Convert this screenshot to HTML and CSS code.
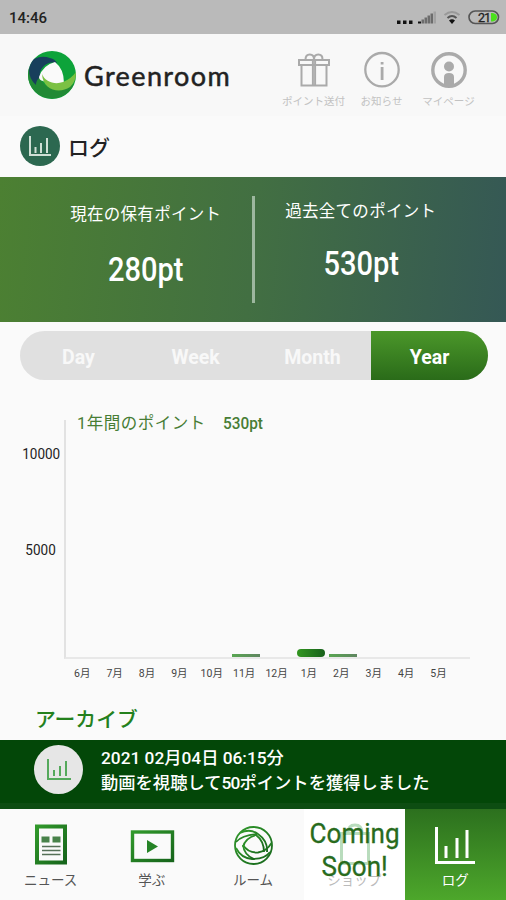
FILE: index.html
```html
<!DOCTYPE html>
<html lang="ja">
<head>
    <meta charset="UTF-8">
    <meta name="viewport" content="width=device-width, initial-scale=1.0">
    <title>Greenroom - ログ</title>
    <link rel="stylesheet" href="styles.css">
</head>
<body>
    <div class="status-bar">
        <span class="time">14:46</span>
        <svg class="status-icons" width="104" height="20" viewBox="0 0 104 20">
            <path d="M1 11.500h3.500v3.500H1zM7 11.500h3.500v3.500H7zM13 11.500h3.500v3.500H13z" fill="#111"/>
            <path d="M22 14.500v-2h3v2z" fill="#111"/>
            <path d="M25.500 14.500v-4H28v4zM28.500 14.500v-6H31v6zM31.500 14.500v-8H34v8zM34.500 14.500v-10H37v10z" fill="#6c6c6c"/>
            <path d="M37.500 14.500v-12H40v12z" fill="#a2a2a2"/>
            <path d="M48.500 6q7.500-6 15 0" fill="none" stroke="#999" stroke-width="2"/>
            <path d="M51.500 9q4.500-4 9 0" fill="none" stroke="#555" stroke-width="2"/>
            <path d="M53 11.500q3-2.500 6 0L56 15z" fill="#111"/>
            <rect x="73" y="2" width="29.500" height="12.500" rx="6.200" fill="none" stroke="#555" stroke-width="1.600"/>
            <path d="M95 4h2q4 1 4 4.200T97 12.500h-2z" fill="#4be01c"/>
            <text x="82" y="12.500" font-size="12.500" fill="#222" stroke="#222" stroke-width=".3" textLength="13">21</text>
        </svg>
    </div>

    <header>
        <svg class="logo" width="48" height="48" viewBox="0 0 48 48">
            <circle cx="24" cy="24" r="24" fill="#0da33a"/>
            <path d="M0 24A24 24 0 0 0 46 33Q32 42 20 36Q12 31 11 22L1 17Q0 20 0 24z" fill="#218a35"/>
            <path d="M1 19Q2 12 6 8Q14 4 22 7Q27 8 29 12Q20 10 15 16Q11 20 12 26Q8 29 8 34Q1 28 1 19z" fill="#183f5c"/>
            <path d="M11 26Q15 14 27 11Q36 18 36 32Q24 36 15 30Q11 29 11 26z" fill="#fafafa"/>
            <path d="M14 23C17 31 27 34 35 31Q43 28 48 21Q48 31 42 36C32 43 15 40 14 23z" fill="#7bc143"/>
        </svg>
        <h1>Greenroom</h1>
        <nav class="top-nav">
            <a class="gift" href="#">
                <svg width="36" height="38" viewBox="0 0 36 38">
                    <g fill="none" stroke="#aaa" stroke-width="2">
                        <path d="M3 9h30v5H3zM5.500 14h25v20.500h-25zM16.900 9v25.500M19.100 9v25.500"/>
                        <path d="M9.500 8.500q0-5 4.300-5T18 8.500q0-5 4.300-5t4.200 5"/>
                    </g>
                </svg>
                <span>ポイント送付</span>
            </a>
            <a class="info" href="#">
                <svg width="36" height="38" viewBox="0 0 36 38">
                    <circle cx="18" cy="18.700" r="16.700" fill="none" stroke="#aaa" stroke-width="2.300"/>
                    <path d="M16.700 16h2.800v13h-2.800zM16.700 11h2.800v2.600h-2.800z" fill="#aaa"/>
                </svg>
                <span>お知らせ</span>
            </a>
            <a class="mypage" href="#">
                <svg width="36" height="38" viewBox="0 0 36 38">
                    <circle cx="18" cy="19" r="16.200" fill="none" stroke="#aaa" stroke-width="3.400"/>
                    <circle cx="18" cy="15.500" r="5" fill="#aaa"/>
                    <path d="M13 35v-9q0-4 5-4t5 4v9z" fill="#aaa"/>
                </svg>
                <span>マイページ</span>
            </a>
        </nav>
    </header>

    <div class="page-title">
        <div class="title-icon">
            <svg width="24" height="22" viewBox="0 0 24 22" fill="none" stroke="#d0e0d6" stroke-width="2">
                <path d="M2 1v19H23M7.500 18v-6M13 18V8M19 18V3"/>
            </svg>
        </div>
        <h2>ログ</h2>
    </div>

    <section class="points">
        <div class="current">
            <p>現在の保有ポイント</p>
            <strong>280pt</strong>
        </div>
        <div class="total">
            <p>過去全てのポイント</p>
            <strong>530pt</strong>
        </div>
    </section>

    <div class="tabs">
        <button>Day</button>
        <button>Week</button>
        <button>Month</button>
        <button class="active">Year</button>
    </div>

    <!-- グラフ -->
    <section class="chart">
        <div class="y-axis">
            <span>10000</span>
            <span>5000</span>
        </div>
        <div class="plot">
            <h3>1年間のポイント<span>530pt</span></h3>
            <div class="bars">
                <i></i><i></i><i></i><i></i><i></i><i class="low"></i>
                <i></i><i class="high"></i><i class="low"></i><i></i><i></i><i></i>
            </div>
        </div>
        <div class="months">
            <span>6月</span><span>7月</span><span>8月</span><span>9月</span>
            <span>10月</span><span>11月</span><span>12月</span><span>1月</span>
            <span>2月</span><span>3月</span><span>4月</span><span>5月</span>
        </div>
    </section>

    <h2 class="archive-title">アーカイブ</h2>
    <div class="archive">
        <div class="archive-icon">
            <svg width="26" height="23" viewBox="0 0 26 23" fill="none" stroke="#55a95c" stroke-width="2">
                <path d="M2 1v20h23M8 18v-6M14 18V8M20 18V3"/>
            </svg>
        </div>
        <div class="archive-text">
            <p class="date">2021 02月04日 06:15分</p>
            <p class="detail">動画を視聴して<b>50</b>ポイントを獲得しました</p>
        </div>
    </div>

    <footer>
        <a href="#">
            <svg width="46" height="44" viewBox="0 0 46 44">
                <defs>
                    <linearGradient id="green" x1="0" y1="0" x2="1" y2="1">
                        <stop offset="0" stop-color="#31992b"/>
                        <stop offset="1" stop-color="#16651b"/>
                    </linearGradient>
                </defs>
                <rect x="9" y="3.500" width="28" height="36" fill="none" stroke="url(#green)" stroke-width="4"/>
                <path d="M13.500 13.500h8v6h-8zM24.500 13.500h8v6h-8z" fill="#48824a"/>
                <path d="M14 23.500h18.500M14 27.500h18.500M14 31.500h18.500" stroke="#557057" stroke-width="1.300"/>
            </svg>
            <span>ニュース</span>
        </a>
        <a href="#">
            <svg width="46" height="44" viewBox="0 0 46 44">
                <rect x="3.500" y="9" width="40" height="28.500" fill="none" stroke="url(#green)" stroke-width="3.400"/>
                <path d="M18 17l11 6.500L18 30z" fill="#258326"/>
            </svg>
            <span>学ぶ</span>
        </a>
        <a href="#">
            <svg width="46" height="44" viewBox="0 0 46 44" fill="none" stroke="url(#green)" stroke-width="1.800">
                <circle cx="23.500" cy="22.500" r="18.500"/>
                <path d="M10 10Q20 5 28 11Q38 18 37 29"/>
                <path d="M6 19Q12 12 27 11"/>
                <path d="M13 24Q15 15 26 12Q34 18 34 29"/>
                <path d="M13 22Q18 30 28 29.500Q37 28 41.500 20"/>
                <path d="M6 25Q11 35 22 36Q35 36 40 29"/>
                <path d="M13 22Q14 32 24 36"/>
            </svg>
            <span>ルーム</span>
        </a>
        <a class="shop" href="#">
            <svg width="46" height="44" viewBox="0 0 46 44" fill="none" stroke="#b9dcbd" stroke-width="3">
                <path d="M10.500 10.500h27v30h-27zM17 10q0-8 7-8t7 8"/>
            </svg>
            <span>ショップ</span>
            <strong class="coming-soon">Coming<br>Soon!</strong>
        </a>
        <a class="active" href="#">
            <svg width="46" height="44" viewBox="0 0 46 44" fill="none" stroke="#fff" stroke-width="3">
                <path d="M4.500 4v35.500H43M14 35V23M25 35V15M35 35V7"/>
            </svg>
            <span>ログ</span>
        </a>
    </footer>
</body>
</html>
```
FILE: styles.css
```css
* {
    margin: 0;
    padding: 0;
    box-sizing: border-box;
}

body {
    width: 506px;
    height: 900px;
    overflow: hidden;
    background-color: #fafafa;
    color: #222;
    font-family: Roboto, "Noto Sans CJK JP", sans-serif;
}

a {
    color: inherit;
    text-decoration: none;
}

svg {
    display: block;
}

.status-bar {
    display: flex;
    justify-content: space-between;
    height: 34px;
    padding: 9px 6px 0 9px;
    background-color: #bababa;
}

.time {
    font-size: 15px;
    font-weight: 500;
    line-height: 18px;
}

header {
    display: flex;
    height: 82px;
    padding: 17px 22px 0 28px;
    background-color: #f8f8f8;
}

header h1 {
    width: 154px;
    margin-left: 8px;
    font-family: Lato, sans-serif;
    font-size: 27px;
    font-weight: 400;
    line-height: 49px;
    letter-spacing: 1.4px;
    -webkit-text-stroke: 0.5px #222;
}

.top-nav {
    display: flex;
    margin-left: 41px;
}

.top-nav a {
    display: flex;
    flex-direction: column;
    align-items: center;
    width: 67px;
    color: #c2c2c2;
    font-size: 10.500px;
    line-height: 15px;
    white-space: nowrap;
}

.top-nav .gift {
    width: 69px;
}

.top-nav span {
    margin-top: 5px;
}

.page-title {
    display: flex;
    align-items: center;
    height: 61px;
    padding: 0 0 2px 20px;
}

.title-icon {
    display: flex;
    align-items: center;
    justify-content: center;
    width: 40px;
    height: 40px;
    border-radius: 50%;
    background-color: #2c6850;
}

.page-title h2 {
    margin-left: 8px;
    font-size: 21px;
    font-weight: 500;
}

.points {
    display: flex;
    height: 145px;
    padding-top: 19px;
    background: linear-gradient(95deg, #4c8032, #426f42 50%, #355855);
    color: #fff;
    text-align: center;
}

.points div {
    width: 252px;
}

.points .current {
    height: 107px;
    width: 255px;
    border-right: 3px solid #9db79f;
    padding: 6px 0 0 40px;
}

.points .total {
    padding: 3px 39px 0 0;
}

.points p {
    font-size: 16.500px;
    line-height: 25px;
    letter-spacing: 0.3px;
}

.points strong {
    display: block;
    margin-top: 23px;
    font-size: 33px;
    font-weight: 500;
    line-height: 40px;
    transform: scaleX(0.88);
}

.points .total strong {
    margin-top: 20px;
}

.tabs {
    display: flex;
    height: 49px;
    margin: 9px 18px 0 20px;
    border-radius: 25px;
    overflow: hidden;
    background-color: #e0e0e0;
}

.tabs button {
    flex: 1;
    padding-top: 3px;
    border: none;
    background: none;
    color: #f8f8f8;
    font-family: Roboto, sans-serif;
    font-size: 19.500px;
    font-weight: 700;
}

.tabs .active {
    background: linear-gradient(#4b972a, #2a6b19);
    color: #fff;
}

.chart {
    display: grid;
    grid-template-columns: 44px 406px;
    grid-template-rows: 239px 24px;
    margin: 40px 0 0 20px;
}

.y-axis {
    display: flex;
    flex-direction: column;
    align-items: flex-end;
    gap: 78px;
    padding: 25px 4px 0 0;
    font-size: 15px;
    line-height: 18px;
}

.y-axis span {
    transform: scaleX(0.9);
    transform-origin: right;
}

.y-axis span:last-child {
    margin-right: 4px;
}

.plot {
    display: flex;
    flex-direction: column;
    justify-content: space-between;
    border-left: 2px solid #e2e2e2;
    border-bottom: 2px solid #e8e8e8;
}

.plot h3 {
    margin: -8px 0 0 11px;
    color: #477d35;
    font-size: 16.500px;
    font-weight: 400;
    line-height: 24px;
    letter-spacing: 0.5px;
}

.plot h3 span {
    display: inline-block;
    margin-left: 17px;
    font-size: 16px;
    font-weight: 500;
    letter-spacing: 0;
    transform: scaleX(0.96);
    transform-origin: left;
}

.bars {
    display: grid;
    grid-template-columns: repeat(12, 32.400px);
    align-items: end;
}

.bars i {
    width: 28px;
    margin-left: 4px;
}

.bars .low {
    height: 3px;
    background: linear-gradient(90deg, #58a651, #5f8560);
}

.bars .high {
    height: 8px;
    border-radius: 4px;
    background: linear-gradient(90deg, #329620, #17601b);
}

.months {
    grid-column: 2;
    display: grid;
    grid-template-columns: repeat(12, 32.400px);
    padding: 6px 0 0 2px;
    color: #444;
    font-size: 10.500px;
    line-height: 18px;
    text-align: center;
}

.archive-title {
    height: 57px;
    padding: 21px 0 0 35px;
    color: #24811d;
    font-size: 20.800px;
    font-weight: 500;
    line-height: 32px;
}

.archive {
    display: flex;
    height: 69px;
    padding: 5px 0 0 34px;
    background-color: #034708;
    border-bottom: 6px solid #0d4d12;
    color: #fff;
}

.archive-icon {
    display: flex;
    align-items: center;
    justify-content: center;
    width: 49px;
    height: 49px;
    border-radius: 50%;
    background-color: #e6e6e6;
}

.archive-text {
    margin-left: 18px;
    padding-top: 1px;
    font-size: 17.300px;
    font-weight: 500;
    line-height: 25px;
    white-space: nowrap;
}

.detail b {
    font-weight: 500;
    letter-spacing: -0.8px;
}

footer {
    display: flex;
    height: 91px;
}

footer a {
    position: relative;
    display: flex;
    flex-direction: column;
    align-items: center;
    width: 101.200px;
    padding-top: 14px;
    color: #555;
    font-size: 13.500px;
    line-height: 20px;
}

footer a > span {
    margin-top: 3px;
}

footer .active {
    background: linear-gradient(#2c701e, #4da72b);
    color: #fff;
}

footer .shop {
    background-color: #fff;
}

.shop span {
    color: #bbb;
}

.coming-soon {
    position: absolute;
    top: 8px;
    left: 0;
    width: 100%;
    color: #286b1d;
    font-size: 28px;
    font-weight: 400;
    line-height: 33px;
    text-align: center;
    transform: scaleX(0.93);
    -webkit-text-stroke: 0.3px #286b1d;
}
```
